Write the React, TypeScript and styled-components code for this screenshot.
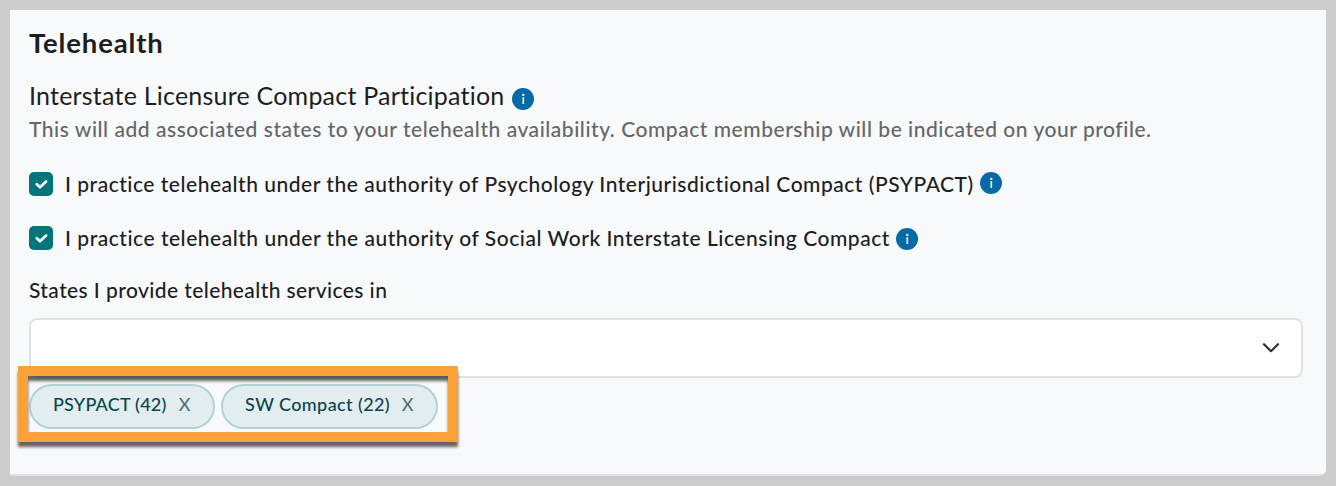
import React from 'react';
import styled, { createGlobalStyle } from 'styled-components';

const GlobalStyle = createGlobalStyle`
  *, *::before, *::after { box-sizing: border-box; }
  body {
    margin: 0;
    background: #ccc;
    font-family: Lato, "Open Sans", sans-serif;
    font-variant-ligatures: none;
    color: #1c1e1f;
  }
`;

const Frame = styled.div`
  height: 486px;
  padding: 10px;
  background: #cccccc;
`;

const Panel = styled.section`
  height: 466px;
  padding: 14px 24px 0 19px;
  background: #f8f9fb;
  border-bottom: 2px solid #dfe1e6;
  border-bottom-right-radius: 6px;
`;

const Text = styled.span<{ $spacing: number }>`
  letter-spacing: ${(p) => p.$spacing}px;
  white-space: nowrap;
`;

const Title = styled.h2`
  margin: 0;
  height: 38px;
  font-size: 27.5px;
  line-height: 38px;
  font-weight: 700;
`;

const Heading = styled.h3`
  display: flex;
  align-items: center;
  gap: 8px;
  margin: 16px 0 0;
  height: 34px;
  font-size: 25px;
  line-height: 34px;
  font-weight: 400;
`;

const Description = styled.p`
  margin: 1px 0 0;
  height: 32px;
  font-size: 21px;
  line-height: 32px;
  font-weight: 500;
  color: #666666;
`;

const Options = styled.div`
  display: flex;
  flex-direction: column;
  gap: 30px;
  margin-top: 27px;
`;

const Option = styled.label`
  display: flex;
  align-items: center;
  height: 24px;
  font-size: 21px;
  line-height: 26px;
  font-weight: 500;
`;

const Checkbox = styled.span`
  display: flex;
  align-items: center;
  justify-content: center;
  flex: none;
  width: 24px;
  height: 24px;
  margin-right: 12px;
  border-radius: 5px;
  background: #00767b;
`;

const Info = styled.svg<{ $top?: number; $left?: number }>`
  display: block;
  flex: none;
  width: 22px;
  height: 22px;
  margin-top: ${(p) => p.$top ?? 0}px;
  margin-left: ${(p) => p.$left ?? 0}px;
`;

const FieldLabel = styled.div`
  margin-top: 25px;
  height: 30px;
  font-size: 21px;
  line-height: 30px;
  font-weight: 500;
`;

const Select = styled.div`
  display: flex;
  align-items: center;
  justify-content: flex-end;
  width: 1274px;
  height: 60px;
  margin-top: 13px;
  padding-right: 21px;
  border: 2px solid #dfe1e6;
  border-radius: 8px;
  background: #ffffff;
`;

const Chips = styled.div`
  position: relative;
  display: flex;
  gap: 6px;
  width: max-content;
  margin-top: 6px;
`;

const Chip = styled.div<{ $width: number }>`
  display: flex;
  width: ${(p) => p.$width}px;
  height: 45px;
  padding: 0 0 5px 22px;
  align-items: center;
  border: 2px solid #b1d3d7;
  border-radius: 23px;
  background: #e3ecef;
  color: #06474c;
  font-size: 18px;
  font-weight: 500;
`;

const Remove = styled.span`
  margin-left: auto;
  margin-right: 22.5px;
  color: #466f74;
  font-weight: 400;
`;

const Highlight = styled.div`
  position: absolute;
  top: -18px;
  left: -11px;
  width: 440px;
  height: 76px;
  border: 10px solid #faa238;
  filter: drop-shadow(0 5px 1.5px rgba(0, 0, 0, 0.6));
  pointer-events: none;
`;

const InfoIcon = ({ top, left }: { top?: number; left?: number }) => (
  <Info viewBox="0 0 22 22" $top={top} $left={left}>
    <circle cx="11" cy="11" r="11" fill="#056aa6" />
    <circle cx="11.3" cy="6.9" r="1.2" fill="#f2f7fa" />
    <path d="M11.3 9.2V16" stroke="#e6eff5" strokeWidth="1.7" />
  </Info>
);

const Check = () => (
  <Checkbox>
    <svg width="24" height="24" viewBox="0 0 24 24" fill="none">
      <path d="M7.8 12.2l3.2 3 6.1-5.8" stroke="#fff" strokeWidth="2.7" strokeLinecap="round" strokeLinejoin="round" />
    </svg>
  </Checkbox>
);

const options = [
  { text: 'I practice telehealth under the authority of Psychology Interjurisdictional Compact (PSYPACT)', spacing: 0.513, top: -2, left: 6 },
  { text: 'I practice telehealth under the authority of Social Work Interstate Licensing Compact', spacing: 0.522, top: 2, left: 6 },
];

const chips = [
  { text: 'PSYPACT (42)', width: 186, spacing: 0.22 },
  { text: 'SW Compact (22)', width: 217, spacing: 0.4 },
];

export default function App() {
  return (
    <>
      <GlobalStyle />
      <Frame>
        <Panel>
          <Title><Text $spacing={0.85}>Telehealth</Text></Title>
          <Heading>
            <Text $spacing={0.22}>Interstate Licensure Compact Participation</Text>
            <InfoIcon top={8} left={-0.8} />
          </Heading>
          <Description>
            <Text $spacing={0.53}>
              This will add associated states to your telehealth availability. Compact membership will be indicated on your profile.
            </Text>
          </Description>
          <Options>
            {options.map((o) => (
              <Option key={o.text}>
                <Check />
                <Text $spacing={o.spacing}>{o.text}</Text>
                <InfoIcon top={o.top} left={o.left} />
              </Option>
            ))}
          </Options>
          <FieldLabel><Text $spacing={0.41}>States I provide telehealth services in</Text></FieldLabel>
          <Select>
            <svg width="18" height="12" viewBox="0 0 18 12" fill="none">
              <path d="M2 2.2l7 7 7-7" stroke="#2b3238" strokeWidth="2.2" strokeLinecap="round" strokeLinejoin="round" />
            </svg>
          </Select>
          <Chips>
            {chips.map((c) => (
              <Chip key={c.text} $width={c.width}>
                <Text $spacing={c.spacing}>{c.text}</Text>
                <Remove>X</Remove>
              </Chip>
            ))}
            <Highlight />
          </Chips>
        </Panel>
      </Frame>
    </>
  );
}
